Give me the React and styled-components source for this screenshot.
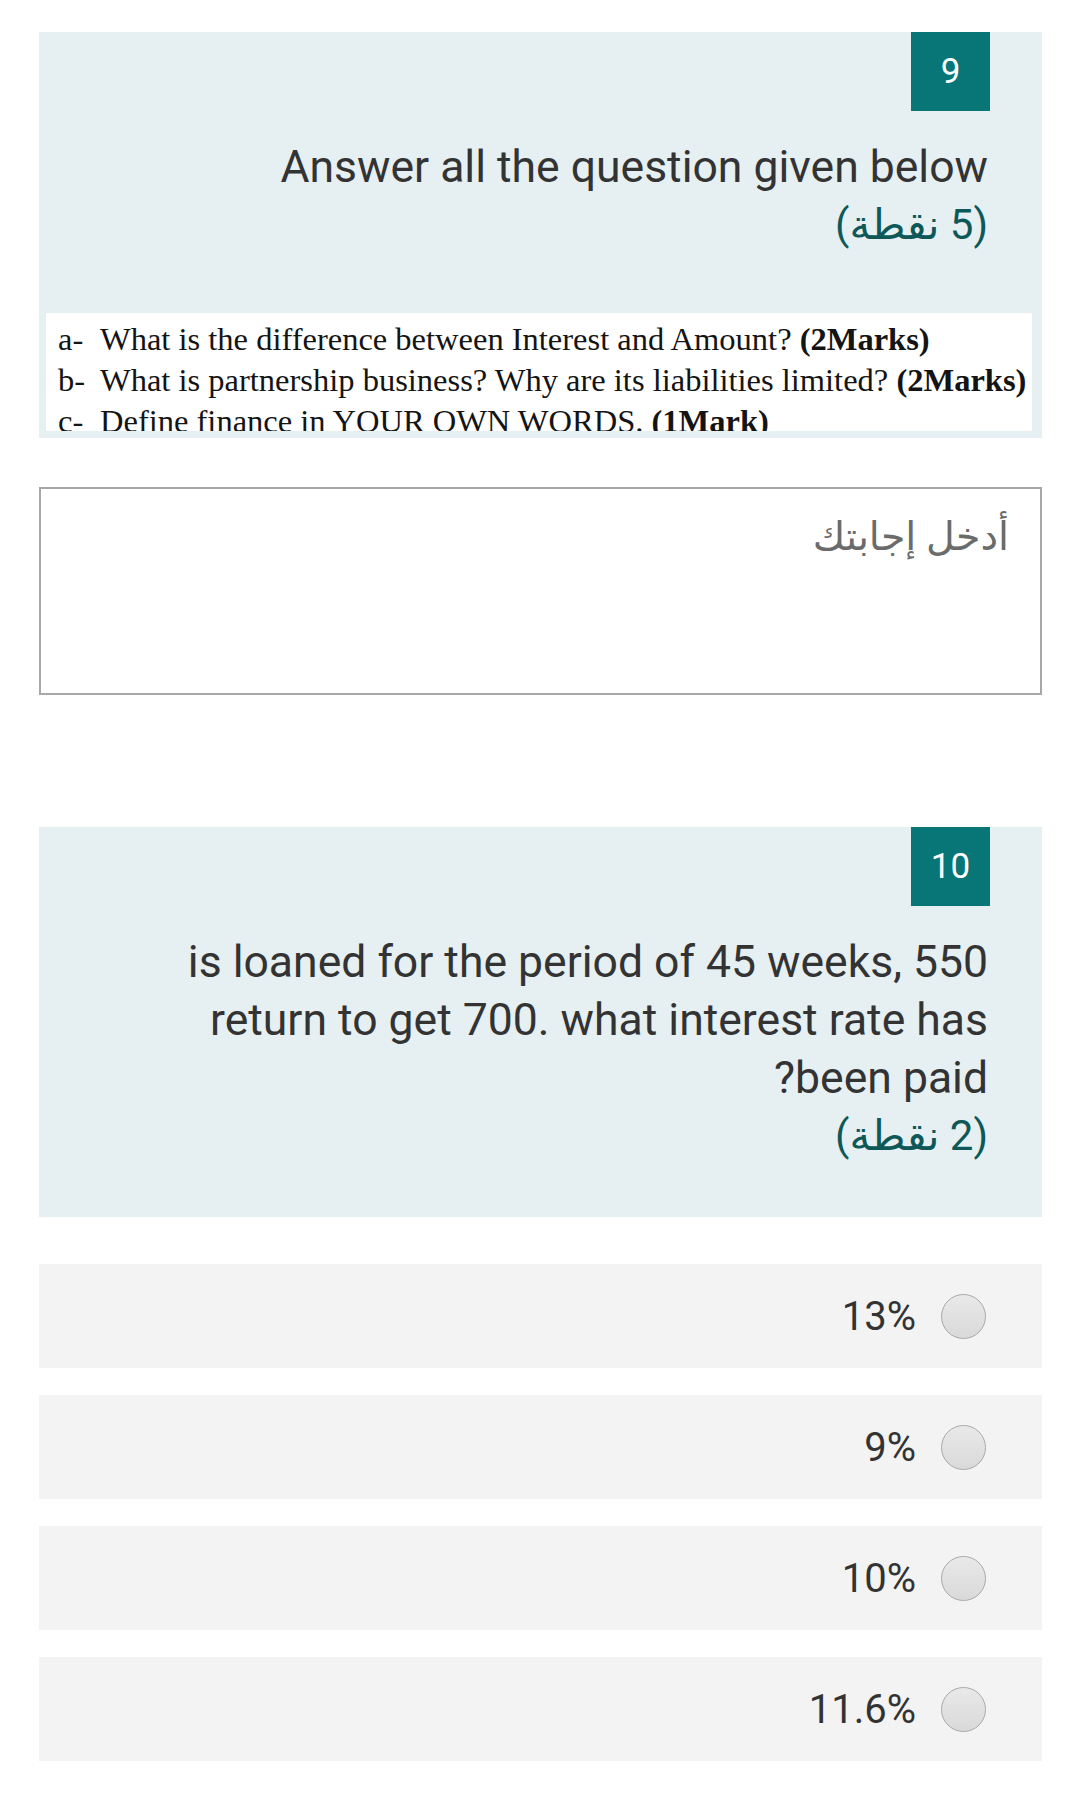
import React from "react";
import styled, { createGlobalStyle } from "styled-components";

const GlobalStyle = createGlobalStyle`
  html, body {
    margin: 0;
    padding: 0;
    background: #ffffff;
  }
  body {
    font-family: Roboto, "DejaVu Sans", "Noto Sans", sans-serif;
    color: #333333;
  }
`;

const options = ["13%", "9%", "10%", "11.6%"];

const App = () => {
  return (
    <>
      <GlobalStyle />
      <Page>
        <Card>
          <Badge>9</Badge>
          <Question>
            Answer all the question given below
            <Points>(5 نقطة)</Points>
          </Question>
          <Attachment>
            <AttachLine>
              <Label>a-</Label>
              <span>
                What is the difference between Interest and Amount? <b>(2Marks)</b>
              </span>
            </AttachLine>
            <AttachLine>
              <Label>b-</Label>
              <span>
                What is partnership business? Why are its liabilities limited? <b>(2Marks)</b>
              </span>
            </AttachLine>
            <AttachLine>
              <Label>c-</Label>
              <span>
                Define finance in YOUR OWN WORDS. <b>(1Mark)</b>
              </span>
            </AttachLine>
          </Attachment>
        </Card>

        <AnswerBox>
          <Placeholder>أدخل إجابتك</Placeholder>
        </AnswerBox>

        <Card $gap="132px" $bottom="52px">
          <Badge>10</Badge>
          <Question $wide>
            550 is loaned for the period of 45 weeks, return to get 700. what interest rate has been paid?
            <Points>(2 نقطة)</Points>
          </Question>
        </Card>

        <OptionList>
          {options.map((o) => (
            <Option key={o}>
              <Radio />
              <OptionText>{o}</OptionText>
            </Option>
          ))}
        </OptionList>
      </Page>
    </>
  );
};

export default App;

const Page = styled.div`
  width: 1080px;
  min-height: 1820px;
  box-sizing: border-box;
  padding: 32px 38px 58px 39px;
  display: flex;
  flex-direction: column;
`;

const Card = styled.div`
  margin-top: ${(p) => p.$gap || "0"};
  padding-bottom: ${(p) => p.$bottom || "7px"};
  background: #e6eff1;
  display: flex;
  flex-direction: column;
`;

const Badge = styled.div`
  align-self: flex-end;
  margin-right: 52px;
  width: 79px;
  height: 79px;
  background: #087676;
  color: #ffffff;
  font-size: 35px;
  display: flex;
  align-items: center;
  justify-content: center;
`;

const Question = styled.div`
  direction: rtl;
  text-align: right;
  margin: 27px 54px 0 ${(p) => (p.$wide ? "109px" : "54px")};
  font-size: 44.5px;
  line-height: 58px;
  color: #333333;
`;

const Points = styled.div`
  color: #0e5858;
  font-size: 42px;
`;

const Attachment = styled.div`
  margin: 59px 10px 0 7px;
  height: 118px;
  overflow: hidden;
  background: #ffffff;
  box-sizing: border-box;
  padding: 6px 0 0 12px;
  font-family: "Liberation Serif", "Times New Roman", serif;
  font-size: 32.5px;
  line-height: 41px;
  color: #141414;
`;

const AttachLine = styled.div`
  display: flex;
  white-space: nowrap;
`;

const Label = styled.span`
  width: 42px;
  flex-shrink: 0;
`;

const AnswerBox = styled.div`
  margin-top: 49px;
  height: 208px;
  box-sizing: border-box;
  border: 2px solid #a8a8a8;
  direction: rtl;
  padding: 24px 31px;
`;

const Placeholder = styled.div`
  font-size: 39.5px;
  color: #6b6b6b;
`;

const OptionList = styled.div`
  margin-top: 47px;
  display: flex;
  flex-direction: column;
  gap: 27px;
`;

const Option = styled.div`
  direction: rtl;
  height: 104px;
  background: #f3f3f3;
  display: flex;
  align-items: center;
  gap: 25px;
  padding-right: 56px;
`;

const Radio = styled.div`
  width: 43px;
  height: 43px;
  border-radius: 50%;
  border: 1px solid #a9a9a9;
  background: linear-gradient(#e9e9e9, #d9d9d9);
  flex-shrink: 0;
`;

const OptionText = styled.span`
  font-size: 40px;
  color: #333333;
`;
